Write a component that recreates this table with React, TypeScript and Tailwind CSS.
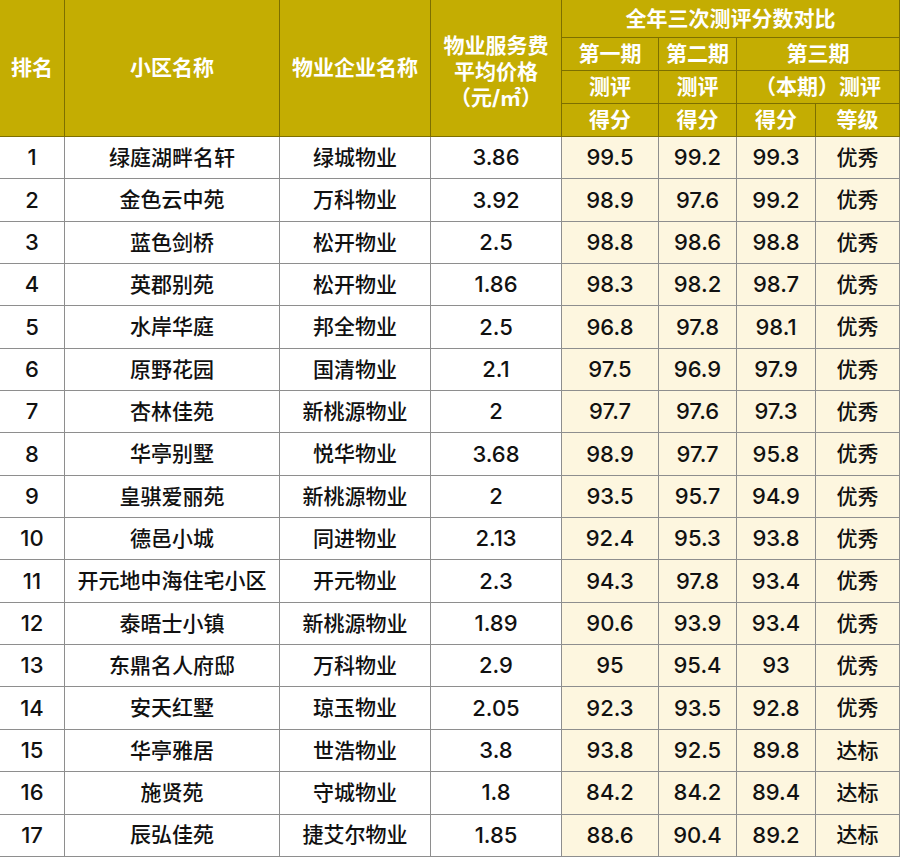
import React from "react";

const rows: [string, string, string, string, string, string, string, string][] = [
  ["1", "绿庭湖畔名轩", "绿城物业", "3.86", "99.5", "99.2", "99.3", "优秀"],
  ["2", "金色云中苑", "万科物业", "3.92", "98.9", "97.6", "99.2", "优秀"],
  ["3", "蓝色剑桥", "松开物业", "2.5", "98.8", "98.6", "98.8", "优秀"],
  ["4", "英郡别苑", "松开物业", "1.86", "98.3", "98.2", "98.7", "优秀"],
  ["5", "水岸华庭", "邦全物业", "2.5", "96.8", "97.8", "98.1", "优秀"],
  ["6", "原野花园", "国清物业", "2.1", "97.5", "96.9", "97.9", "优秀"],
  ["7", "杏林佳苑", "新桃源物业", "2", "97.7", "97.6", "97.3", "优秀"],
  ["8", "华亭别墅", "悦华物业", "3.68", "98.9", "97.7", "95.8", "优秀"],
  ["9", "皇骐爱丽苑", "新桃源物业", "2", "93.5", "95.7", "94.9", "优秀"],
  ["10", "德邑小城", "同进物业", "2.13", "92.4", "95.3", "93.8", "优秀"],
  ["11", "开元地中海住宅小区", "开元物业", "2.3", "94.3", "97.8", "93.4", "优秀"],
  ["12", "泰晤士小镇", "新桃源物业", "1.89", "90.6", "93.9", "93.4", "优秀"],
  ["13", "东鼎名人府邸", "万科物业", "2.9", "95", "95.4", "93", "优秀"],
  ["14", "安天红墅", "琼玉物业", "2.05", "92.3", "93.5", "92.8", "优秀"],
  ["15", "华亭雅居", "世浩物业", "3.8", "93.8", "92.5", "89.8", "达标"],
  ["16", "施贤苑", "守城物业", "1.8", "84.2", "84.2", "89.4", "达标"],
  ["17", "辰弘佳苑", "捷艾尔物业", "1.85", "88.6", "90.4", "89.2", "达标"],
];

const H =
  "flex items-center justify-center text-center bg-[#c4ad02] text-white font-bold text-[21px] leading-[26px] border-r border-b border-[#7d6f00]";
const B =
  "flex items-center justify-center text-center text-[#111] font-medium border-r border-b border-[#8e8e8e]";
const NUM = "text-[22px]";
const CJK = "text-[21px]";

export default function App() {
  return (
    <div
      className="w-[900px] h-[859px] bg-white overflow-hidden"
      style={{ fontFamily: 'Inter, "Noto Sans CJK SC", sans-serif' }}
    >
      <div className="grid grid-cols-[65px_215px_151px_131px_97px_78px_79px_84px] grid-rows-[38px_33px_33px_33px_repeat(17,42.35px)]">
        <div className={`${H} row-span-4`}>排名</div>
        <div className={`${H} row-span-4`}>小区名称</div>
        <div className={`${H} row-span-4`}>物业企业名称</div>
        <div className={`${H} row-span-4 flex-col pt-[8px]`}>
          <div>物业服务费</div>
          <div>平均价格</div>
          <div>（元/㎡）</div>
        </div>
        <div className={`${H} col-span-4`}>全年三次测评分数对比</div>
        <div className={H}>第一期</div>
        <div className={H}>第二期</div>
        <div className={`${H} col-span-2`}>第三期</div>
        <div className={H}>测评</div>
        <div className={H}>测评</div>
        <div className={`${H} col-span-2`}>（本期）测评</div>
        <div className={H}>得分</div>
        <div className={H}>得分</div>
        <div className={H}>得分</div>
        <div className={H}>等级</div>
        {rows.map((r, i) => (
          <React.Fragment key={i}>
            <div className={`${B} ${NUM} bg-white`}>{r[0]}</div>
            <div className={`${B} ${CJK} bg-white`}>{r[1]}</div>
            <div className={`${B} ${CJK} bg-white`}>{r[2]}</div>
            <div className={`${B} ${NUM} bg-white`}>{r[3]}</div>
            <div className={`${B} ${NUM} bg-[#fdf6df]`}>{r[4]}</div>
            <div className={`${B} ${NUM} bg-[#fdf6df]`}>{r[5]}</div>
            <div className={`${B} ${NUM} bg-[#fdf6df]`}>{r[6]}</div>
            <div className={`${B} ${CJK} bg-[#fdf6df]`}>{r[7]}</div>
          </React.Fragment>
        ))}
      </div>
    </div>
  );
}
